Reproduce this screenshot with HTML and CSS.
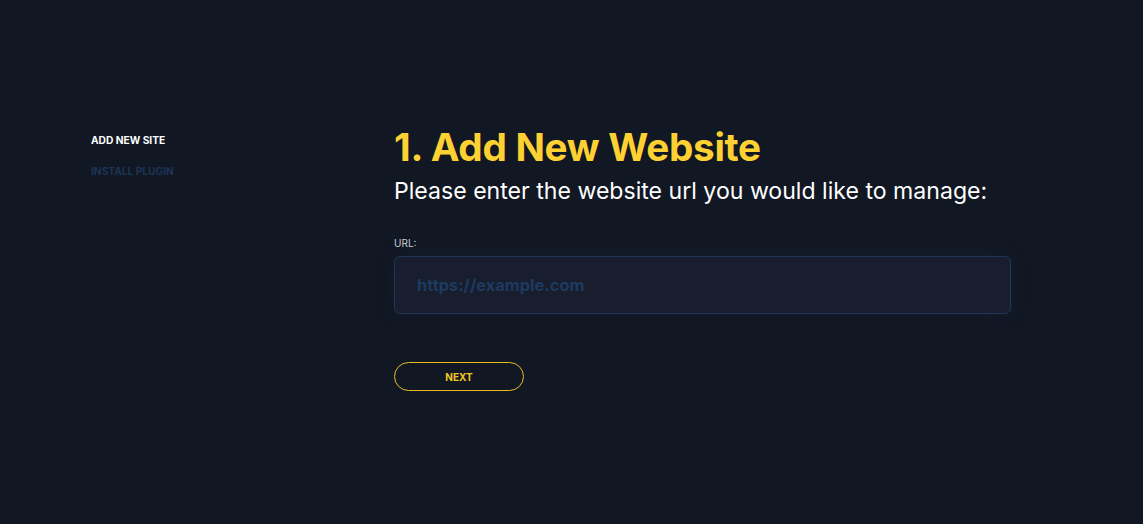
FILE: index.html
```html
<!DOCTYPE html>
<html lang="en">
<head>
	<meta charset="UTF-8">
	<title>Add New Website</title>
	<link rel="stylesheet" href="styles.css">
</head>
<body>
<div class="wrap">
	<ul class="steps">
		<li class="on">Add new site</li>
		<li>Install plugin</li>
	</ul>
	<div class="main">
		<h1>1. Add New Website</h1>
		<p class="lead">Please enter the website url you would like to manage:</p>
		<label class="label" for="url">URL:</label>
		<input type="text" id="url" class="field" placeholder="https://example.com">
		<a href="javascript:;" class="btn">Next</a>
	</div>
</div>
</body>
</html>
```

FILE: styles.css
```css
* {
	margin: 0;
	padding: 0;
	text-decoration: none;
	box-sizing: border-box;
}

body {
	background: #111723;
	font-family: Inter, "Noto Sans", sans-serif;
	color: #fff;
}

.wrap {
	display: flex;
	padding: 125px 0 0 91px;
}

.steps {
	list-style: none;
	width: 303px;
	flex: none;
	padding-top: 8px;
}

.steps li {
	font-size: 10.2px;
	font-weight: 700;
	text-transform: uppercase;
	color: #1d3454;
	line-height: 14px;
	margin-bottom: 17px;
}

.steps .on {
	color: #fff;
}

.main {
	width: 617px;
}

h1 {
	font-size: 38.7px;
	font-weight: 700;
	color: #fdd132;
	line-height: 44px;
	letter-spacing: -0.3px;
}

.lead {
	font-size: 23.1px;
	font-weight: 400;
	color: #fff;
	line-height: 28px;
	margin-top: 8px;
}

.label {
	display: block;
	font-size: 10px;
	color: #c9ced8;
	margin-top: 31px;
	line-height: 14px;
}

.field {
	display: block;
	width: 100%;
	height: 58px;
	margin-top: 6px;
	padding: 0 22px;
	background: #181e2d;
	border: 1px solid #1c375a;
	border-radius: 6px;
	box-shadow: 0 0 18px rgba(28, 36, 54, 0.45);
	font-family: Inter, sans-serif;
	font-size: 16.4px;
	font-weight: 700;
	color: #fff;
	outline: none;
}

.field::placeholder {
	color: #1d3a60;
}

.btn {
	display: block;
	width: 130px;
	height: 29px;
	margin-top: 48px;
	border: 1.5px solid #e9bd22;
	border-radius: 15px;
	color: #f5c623;
	font-size: 10px;
	font-weight: 700;
	text-transform: uppercase;
	text-align: center;
	line-height: 29px;
}
```
